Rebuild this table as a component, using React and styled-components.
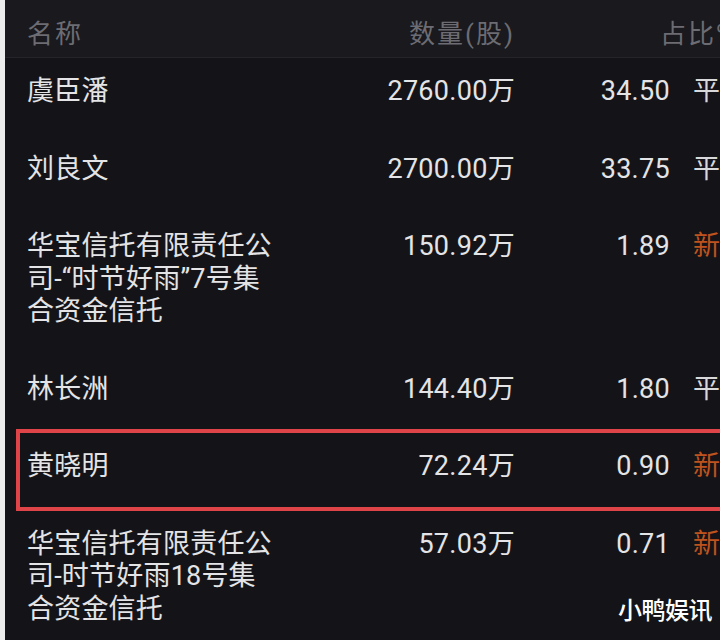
import React from "react";
import styled, { createGlobalStyle } from "styled-components";

const Global = createGlobalStyle`
  html, body { margin: 0; padding: 0; background: #141418; overflow: hidden; }
  body { font-family: Roboto, "Noto Sans CJK SC", sans-serif; }
`;

const Page = styled.div`
  display: flex;
  width: 720px;
  height: 640px;
  overflow: hidden;
  position: relative;
`;

const Strip = styled.div`
  flex: 0 0 5px;
  background: #ececec;
`;

const Table = styled.div`
  flex: 0 0 760px;
  background: #141418;
  display: flex;
  flex-direction: column;
  & > * { flex-shrink: 0; }
`;

const Grid = styled.div`
  display: grid;
  grid-template-columns: 273px 215px 155px 1fr;
  padding-left: 22px;
  position: relative;
`;

const HeaderRow = styled(Grid)`
  height: 57px;
  align-items: center;
  background: #19191e;
  border-bottom: 1px solid #24242a;
  color: #6c6c72;
  font-size: 26px;
  letter-spacing: 2px;
`;

const HeadCell = styled.div`
  text-align: ${(p) => p.$align || "left"};
  grid-column: ${(p) => p.$span || "auto"};
  padding-right: ${(p) => p.$pr || 0}px;
  margin-top: 6px;
  white-space: nowrap;
`;

const Row = styled(Grid)`
  padding-top: 17px;
  padding-bottom: 28px;
  align-items: start;
  color: #e4e4e6;
  font-size: 27px;
  line-height: 32.5px;
  ${(p) =>
    p.$highlight &&
    `
    &::before {
      content: "";
      position: absolute;
      left: 11px;
      right: -20px;
      top: -4px;
      bottom: 0;
      border: 4px solid #df4449;
      pointer-events: none;
    }
  `}
`;

const Name = styled.div`
  max-width: 250px;
  letter-spacing: 0.2px;
`;

const Num = styled.div`
  text-align: right;
  white-space: nowrap;
  letter-spacing: 0.3px;
`;

const Status = styled.div`
  padding-left: 23px;
  white-space: nowrap;
  color: ${(p) => (p.$new ? "#bf531e" : "#d8d8da")};
`;

const Watermark = styled.div`
  position: absolute;
  right: 8px;
  bottom: 14px;
  color: #ffffff;
  font-family: "Noto Sans CJK SC", sans-serif;
  font-size: 24px;
  font-weight: 500;
  letter-spacing: -0.5px;
`;

const rows = [
  { name: "虞臣潘", qty: "2760.00万", pct: "34.50", st: "平" },
  { name: "刘良文", qty: "2700.00万", pct: "33.75", st: "平" },
  { name: "华宝信托有限责任公司-“时节好雨”7号集合资金信托", qty: "150.92万", pct: "1.89", st: "新" },
  { name: "林长洲", qty: "144.40万", pct: "1.80", st: "平" },
  { name: "黄晓明", qty: "72.24万", pct: "0.90", st: "新", hl: true },
  { name: "华宝信托有限责任公司-时节好雨18号集合资金信托", qty: "57.03万", pct: "0.71", st: "新" },
];

export default function App() {
  return (
    <>
      <Global />
      <Page>
        <Strip />
        <Table>
          <HeaderRow>
            <HeadCell>名称</HeadCell>
            <HeadCell $align="right">数量(股)</HeadCell>
            <HeadCell $span="3 / 5" $align="right" $pr={28}>占比%</HeadCell>
          </HeaderRow>
          {rows.map((r, i) => (
            <Row key={i} $highlight={r.hl}>
              <Name>{r.name}</Name>
              <Num>{r.qty}</Num>
              <Num>{r.pct}</Num>
              <Status $new={r.st === "新"}>{r.st}</Status>
            </Row>
          ))}
        </Table>
        <Watermark>小鸭娱讯</Watermark>
      </Page>
    </>
  );
}
